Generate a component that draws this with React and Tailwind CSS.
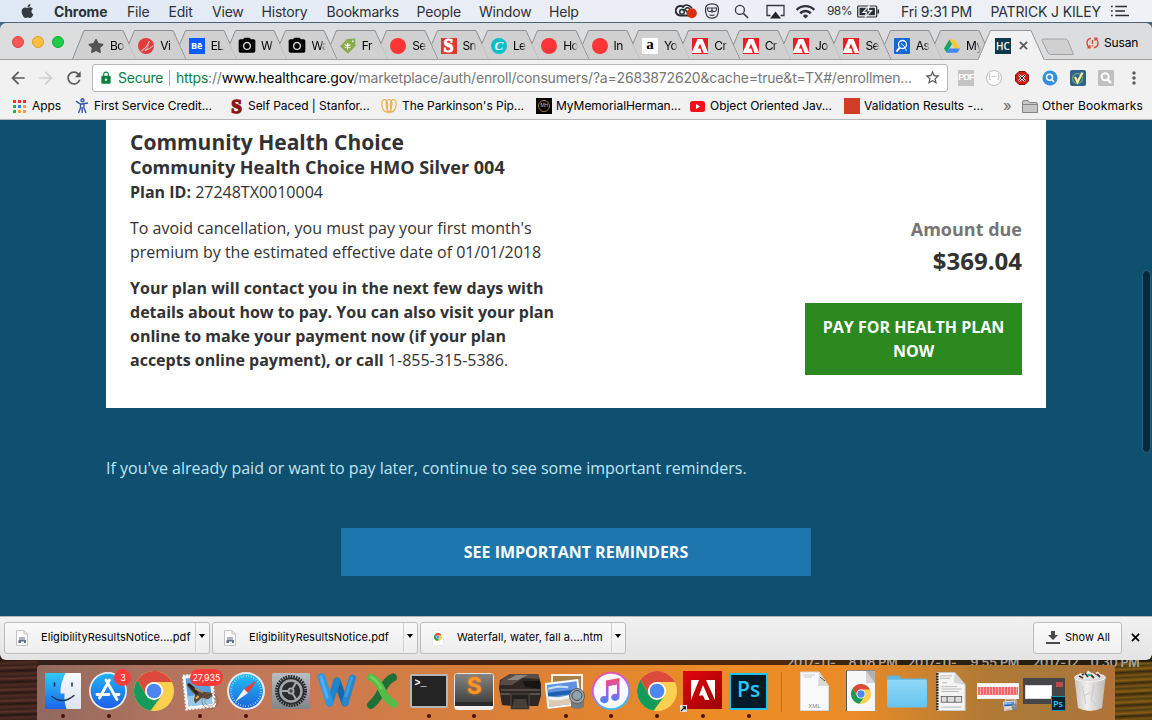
import React from "react";
import { FaApple, FaStar } from "react-icons/fa";
import { MdPhotoCamera, MdStarBorder, MdRefresh, MdArrowBack, MdArrowForward, MdLock, MdMoreVert, MdFileDownload, MdWifi } from "react-icons/md";

/* ---------- shared small drawings ---------- */

function ChromeLogo({ className }) {
  return (
    <svg viewBox="0 0 40 40" className={className}>
      <circle cx="20" cy="20" r="20" fill="#fcd04f" />
      <path d="M3.500 8.700 A20 20 0 0 0 16.500 39.700 L27.800 24.500 L20 29 L12.200 24.500 Z" fill="#129b5a" />
      <path d="M3.500 8.700 A20 20 0 0 1 37.400 10.300 L38 11 H20 Q13 11.500 11.300 17.500 L11.500 23 Z" fill="#dc4a3e" />
      <circle cx="20" cy="20" r="9" fill="#fff" />
      <circle cx="20" cy="20" r="7.300" fill="#4c86ee" />
    </svg>
  );
}

function Cross({ className }) {
  return (
    <svg viewBox="0 0 10 10" className={className} fill="none" stroke="currentColor" strokeWidth="1.900">
      <path d="M1 1 L9 9 M9 1 L1 9" />
    </svg>
  );
}

function AdobeMark({ className, bg }) {
  return (
    <svg viewBox="0 0 16 16" className={className}>
      <rect width="16" height="16" fill={bg} />
      <path d="M0 15 V14 L5.500 1 H10.500 L16 14.500 V15 H11.600 L8 5.600 L5.900 10.600 H8.300 L9.800 15 Z" fill="#fff" />
    </svg>
  );
}

const Star = () => <FaStar className="size-4 text-[#555]" />;
const RedDot = () => <span className="size-4 rounded-full bg-[#fc3636]" />;
const Camera = () => <MdPhotoCamera className="-m-0.5 size-5 shrink-0 text-black" />;
const Adobe = () => <AdobeMark className="size-4 shrink-0" bg="#ed1c24" />;
const Swirl = () => (
  <svg viewBox="0 0 16 16" className="size-4 shrink-0">
    <circle cx="8" cy="8" r="8" fill="#e03c3c" />
    <path d="M2.500 13.500 Q9 10 11.500 3 M7 12.500 Q12 11 15.500 7.500" stroke="#d3d3d4" strokeWidth="1" fill="none" />
    <path d="M3 14 Q9 11 11.500 4 Q11.500 9 8 12 Z" fill="#d3d3d4" fillOpacity="0.5" />
  </svg>
);
const Behance = () => (
  <span className="flex size-4 shrink-0 items-center justify-center bg-[#0a5cff] font-['Open_Sans',sans-serif] text-[9px] font-bold text-white">Bē</span>
);
const Tag = () => (
  <svg viewBox="0 0 16 16" className="size-4 shrink-0">
    <path d="M0 8.400 L7 1 L15.200 0.400 L15.500 8 L8 15.800 Z" fill="#88ab4f" />
    <path d="M7.600 5 V11.400 M4.800 6.600 L10.400 9.800 M10.400 6.600 L4.800 9.800" stroke="#fff" strokeWidth="1.200" />
    <circle cx="12.800" cy="3.200" r="1" fill="#dfe8cf" />
  </svg>
);
const SLogo = () => (
  <span className="flex size-4 shrink-0 items-center justify-center bg-[#dd3a33] font-['Liberation_Serif',serif] text-[18px] leading-none font-bold text-white [-webkit-text-stroke:1px_white]">S</span>
);
const CLogo = () => (
  <span className="flex size-4 shrink-0 items-center justify-center rounded-full bg-[#08bfcb] font-['Liberation_Serif',serif] text-[13px] leading-none font-bold text-white italic">C</span>
);
const ALogo = () => (
  <span className="flex size-4 shrink-0 items-center justify-center bg-white pb-[2px] font-['Liberation_Serif',serif] text-[15px] leading-none font-bold text-black">a</span>
);
const SearchTile = () => (
  <svg viewBox="0 0 16 16" className="size-4 shrink-0">
    <rect width="16" height="16" rx="1" fill="#1567d3" />
    <circle cx="8.500" cy="6.500" r="4" fill="none" stroke="#fff" strokeWidth="1.300" />
    <path d="M5.800 9.600 L2.500 13.500" stroke="#fff" strokeWidth="2" />
    <path d="M7 5.500 L10 8 L12.500 13" stroke="#fff" strokeWidth="0.900" fill="none" />
  </svg>
);
const Drive = () => (
  <svg viewBox="0 0 16 16" className="size-4 shrink-0">
    <path d="M5.400 1.500 H10.600 L16 10.500 H10.800 Z" fill="#fcc934" />
    <path d="M5.400 1.500 L8 6 L2.700 14.800 L0 10.500 Z" fill="#11a661" />
    <path d="M5.300 10.500 H16 L13.300 14.800 H2.700 Z" fill="#4285f4" />
  </svg>
);

/* ---------- menu bar ---------- */

const MENUS = [
  ["File", "w-[41.5px]"],
  ["Edit", "w-[43.5px]"],
  ["View", "w-[49.5px]"],
  ["History", "w-[65px]"],
  ["Bookmarks", "w-[90px]"],
  ["People", "w-[62.5px]"],
  ["Window", "w-[70px]"],
  ["Help", "w-[60px]"],
];

function MenuBar() {
  return (
    <div className="flex h-[23px] items-center border-b border-[#4a6178] bg-linear-to-r from-[#dfe9f5] via-[#ebeef5] to-[#eef2f6] text-[14px] tracking-[-0.2px] text-[#2b3138]">
      <FaApple className="ml-[20px] h-[16px] w-[15px] text-[#333a42]" />
      <span className="ml-[19px] w-[73px] font-bold tracking-[-0.1px]">Chrome</span>
      {MENUS.map(([m, w]) => (
        <span key={m} className={w}>{m}</span>
      ))}
      <svg viewBox="0 0 22 16" className="ml-[66px] h-[16px] w-[22px]">
        <path d="M13.500 12.500 H6 A4.800 4.800 0 1 1 9 4.500" fill="none" stroke="#26292d" strokeWidth="2" />
        <circle cx="7" cy="8.800" r="2.300" fill="none" stroke="#26292d" strokeWidth="1.400" />
        <path d="M7 4 Q12 -0.500 17 5 M7.500 6.500 Q12 7 12.500 10 M10 6 Q13 3.500 15 6" stroke="#26292d" strokeWidth="1.600" fill="none" />
        <circle cx="16.800" cy="10.300" r="5" fill="#d8300d" />
      </svg>
      <svg viewBox="0 0 16 16" className="ml-[7px] size-[16px]" fill="none" stroke="#34383d">
        <path d="M8 0.800 Q14.500 0.800 14.500 6.500 Q14.500 15.200 8 15.200 Q1.500 15.200 1.500 6.500 Q1.500 0.800 8 0.800 Z" strokeWidth="1.200" />
        <path d="M3.500 5 H12.500 V6.500 Q12 9 9.500 8.500 L8 7.500 L6.500 8.500 Q4 9 3.500 6.500 Z" strokeWidth="1.100" />
        <path d="M8 5 V10 M5.500 11.800 Q8 13 10.500 11.800" strokeWidth="1.100" />
      </svg>
      <svg viewBox="0 0 16 16" className="ml-[14px] size-[15px]" fill="none" stroke="#34383d">
        <circle cx="6.300" cy="6.300" r="4.800" strokeWidth="1.400" />
        <path d="M10 10 L15 15" strokeWidth="1.600" />
      </svg>
      <svg viewBox="0 0 19 15" className="ml-[17px] h-[15px] w-[19px]">
        <path d="M4.500 11.500 H1 V1.500 H18 V11.500 H14.500" fill="none" stroke="#34383d" strokeWidth="1.300" />
        <path d="M9.500 7.500 L15 14.500 H4 Z" fill="#22262b" />
      </svg>
      <MdWifi className="ml-[10px] size-[21px] text-[#2f343a]" />
      <span className="ml-[11px] w-[30px] text-[12px] tracking-[-0.6px]">98%</span>
      <svg viewBox="0 0 23 13" className="h-[13px] w-[23px]">
        <rect x="0.700" y="1" width="19" height="11" rx="1" fill="none" stroke="#2a2e33" strokeWidth="1.200" />
        <rect x="2.500" y="2.800" width="15.400" height="7.400" fill="#2a2e33" />
        <path d="M12.500 0.500 L6 7.300 H9.500 L8 12.500 L14.500 5.700 H11 Z" fill="#2a2e33" stroke="#e9eef5" strokeWidth="1.200" />
        <path d="M21.300 4.500 V8.500" stroke="#2a2e33" strokeWidth="1.600" />
      </svg>
      <span className="ml-[21px] w-[89.500px]">Fri 9:31 PM</span>
      <span className="w-[120.500px] tracking-[-0.150px]">PATRICK J KILEY</span>
      <svg viewBox="0 0 18 12" className="h-[12px] w-[18px]" stroke="#2a2e33" strokeWidth="1.500">
        <path d="M0 1.500 H1.700 M0 6 H1.700 M0 10.500 H1.700 M4.300 1.500 H16 M4.300 6 H14 M4.300 10.500 H18" />
      </svg>
    </div>
  );
}

/* ---------- tabs ---------- */

const TABS = [
  [Star, "Bo"], [Swirl, "Vi"], [Behance, "EL"], [Camera, "W"], [Camera, "Wa"], [Tag, "Fr"],
  [RedDot, "Se"], [SLogo, "Sn"], [CLogo, "Le"], [RedDot, "Ho"], [RedDot, "In"], [ALogo, "Yo"],
  [Adobe, "Cr"], [Adobe, "Cr"], [Adobe, "Jo"], [Adobe, "Se"], [SearchTile, "As"], [Drive, "My"],
];

function Tab({ Icon, title, first }) {
  return (
    <div className="relative -mr-[13.65px] flex h-[29px] w-[64px] shrink-0 items-center pt-[2px] pl-[16px]">
      <svg viewBox="0 0 64 29" className="absolute inset-0 h-[29px] w-[64px]">
        <path d={first ? "M0.500 29 L12 0.500 H51 L64 29 Z" : "M6.800 14 L12.500 0.500 H51 L64 29 H13.600 Z"} fill="#d0d0d1" />
        <path d={first ? "M0.500 29 L12 0.500 H51 L64 29" : "M6.800 14 L12.500 0.500 H51 L64 29"} fill="none" stroke="#8f8f90" />
      </svg>
      <span className="relative flex"><Icon /></span>
      <span className="relative ml-[6px] w-[14.500px] mask-r-from-60% mask-r-to-100% text-[12px] tracking-[-0.600px] whitespace-nowrap text-black">
        {title}
      </span>
    </div>
  );
}

function TabStrip() {
  return (
    <div className="flex h-[37px] items-end rounded-t-md border-b border-[#a1a1a2] bg-[#dcdddf]">
      <div className="mb-[11px] ml-3 flex w-[60px] shrink-0 gap-2">
        <span className="size-3 rounded-full border border-[#e0443e] bg-[#fc5753]" />
        <span className="size-3 rounded-full border border-[#dea123] bg-[#fdbc40]" />
        <span className="size-3 rounded-full border border-[#12ac28] bg-[#1ecb48]" />
      </div>
      {TABS.map(([Icon, title], i) => (
        <Tab key={i} Icon={Icon} title={title} first={i === 0} />
      ))}
      <div className="relative -mb-px flex h-[30px] w-[66px] shrink-0 items-center pt-px pl-[16.500px]">
        <svg viewBox="0 0 66 30" className="absolute inset-0 h-[30px] w-[66px]">
          <path d="M0 30 L12.500 0.500 H53 L66 30 Z" fill="#f1f1f2" />
          <path d="M0 29.500 L12.500 0.500 H53 L66 29.500" fill="none" stroke="#969697" />
        </svg>
        <span className="relative flex size-4 items-center justify-center bg-[#0b3a4a] font-['Open_Sans',sans-serif] text-[10px] leading-none font-semibold text-white">HC</span>
        <Cross className="relative ml-[8px] size-[9px] text-[#5a5a5a]" />
      </div>
      <svg viewBox="0 0 34 18" className="mb-[3px] -ml-[3px] h-[18px] w-[34px] shrink-0">
        <path d="M2 1 H24 Q26 1 27 3 L32.500 16.500 H9.500 Q8 16.500 7 14.500 L1 2.500 Q0.700 1 2 1 Z" fill="#d0d0d1" stroke="#a0a0a1" />
      </svg>
      <div className="mb-[7px] ml-[10.500px] flex items-center gap-[5px] text-[12px] tracking-[-0.150px] text-black">
        <svg viewBox="0 0 13 12" className="h-[12px] w-[13px]" fill="none" stroke="#d9463a" strokeWidth="1.400">
          <path d="M5 1.200 Q1 2 1 6 Q1 9 3.500 10.800 M1.500 10.800 H4 V8.300 M8 10.800 Q12 10 12 6 Q12 3 9.500 1.200 M11.500 1.200 H9 V3.700 M6.500 3 V7 M6.500 8.300 V9.600" />
        </svg>
        Susan
      </div>
    </div>
  );
}

/* ---------- toolbar ---------- */

function Toolbar() {
  return (
    <div className="flex h-[35px] items-center bg-[#f1f1f2]">
      <MdArrowBack className="ml-[8px] size-[20px] shrink-0 text-[#5a5a5a]" />
      <MdArrowForward className="ml-[8px] size-[20px] shrink-0 text-[#cfcfcf]" />
      <MdRefresh className="ml-[8px] size-[20px] shrink-0 text-[#5a5a5a]" />
      <div className="ml-[8px] flex h-[28px] w-[856px] shrink-0 items-center rounded-[3px] border border-[#b5b5b6] bg-white text-[14px] whitespace-nowrap">
        <MdLock className="ml-[6px] size-[14px] shrink-0 text-[#0b8043]" />
        <span className="ml-[5px] w-[51px] tracking-[-0.250px] text-[#0b8043]">Secure</span>
        <span className="mr-[6px] h-4 w-px bg-[#a8a8a8]" />
        <span className="w-[738px] tracking-[-0.190px] text-[#777]">
          <span className="text-[#0b8043]">https</span>://<span className="text-black">www.healthcare.gov</span>/marketplace/auth/enroll/consumers/?a=2683872620&amp;cache=true&amp;t=TX#/enrollmen...
        </span>
        <MdStarBorder className="ml-[10px] size-[17px] shrink-0 text-[#555]" />
      </div>
      <div className="ml-[10px] flex shrink-0 items-center gap-[12px]">
        <span className="flex h-4 w-4 items-center justify-center bg-[#c4c4c4] font-['Liberation_Sans',sans-serif] text-[9px] font-bold tracking-[-0.800px] text-white">PDF</span>
        <span className="flex size-4 items-center justify-center rounded-full border border-[#bbb] bg-white text-[7px] text-[#999]">{"{···}"}</span>
        <svg viewBox="0 0 16 16" className="size-4">
          <path d="M5 1.500 H11 L14.500 5 V11 L11 14.500 H5 L1.500 11 V5 Z" fill="#cf1c14" stroke="#7d1712" />
          <path d="M5 5 L11 11 M11 5 L5 11" stroke="#fff" strokeWidth="2.400" />
          <path d="M5 5 L11 11 M11 5 L5 11" stroke="#222" strokeWidth="1" />
        </svg>
        <svg viewBox="0 0 16 16" className="size-4">
          <circle cx="8" cy="8" r="7.500" fill="#348fdc" />
          <circle cx="7.500" cy="7.300" r="3" fill="none" stroke="#fff" strokeWidth="1.500" />
          <path d="M9.500 9.500 L12 12" stroke="#fff" strokeWidth="1.600" />
        </svg>
        <svg viewBox="0 0 16 16" className="size-4">
          <rect width="16" height="16" rx="2" fill="#2f628f" />
          <circle cx="7.500" cy="8.500" r="5" fill="none" stroke="#6fa36f" strokeWidth="1.300" />
          <path d="M5 7 L7.500 12 L12.500 2.500" fill="none" stroke="#f4ef9a" strokeWidth="2.200" />
        </svg>
        <svg viewBox="0 0 16 16" className="size-4">
          <rect width="16" height="16" rx="1" fill="#c0c0c0" />
          <circle cx="7.200" cy="6.800" r="3.500" fill="none" stroke="#fff" strokeWidth="2" />
          <path d="M9.800 9.600 L13 13" stroke="#fff" strokeWidth="2.400" />
        </svg>
      </div>
      <MdMoreVert className="ml-[10px] size-[20px] shrink-0 text-[#5a5a5a]" />
    </div>
  );
}

/* ---------- bookmarks bar ---------- */

const APP_DOTS = [
  "bg-[#ea3323]", "bg-[#ea3323]", "bg-[#ea3323]",
  "bg-[#2fa84f]", "bg-[#2d7ff0]", "bg-[#f0a32c]",
  "bg-[#2fa84f]", "bg-[#f0a32c]", "bg-[#f0a32c]",
];

function Bookmarks() {
  return (
    <div className="flex h-[25px] items-center border-b border-[#b6b6b7] bg-[#f1f1f2] pb-[2px] text-[12px] tracking-[-0.050px] whitespace-nowrap text-black">
      <div className="ml-[13px] grid w-[13px] grid-cols-3 gap-[2px]">
        {APP_DOTS.map((c, i) => <span key={i} className={`size-[3px] ${c}`} />)}
      </div>
      <span className="ml-[6px] w-[43px]">Apps</span>
      <svg viewBox="0 0 14 16" className="h-[16px] w-[14px] shrink-0" fill="none" stroke="#3457a5" strokeWidth="1.400">
        <circle cx="7.500" cy="2.200" r="1.500" />
        <path d="M1 3 Q5 6.500 7 6 T13 5 M5.500 6.500 V10 L3.500 15 M9 6.500 V10 L11 15 M7.200 9 V15" />
      </svg>
      <span className="ml-[5px] w-[136px]">First Service Credit...</span>
      <span className="flex w-[13px] justify-center font-['Liberation_Serif',serif] text-[19px] leading-none font-bold text-[#8c1515] [-webkit-text-stroke:1.500px_#8c1515]">S</span>
      <span className="ml-[5px] w-[133px]">Self Paced | Stanfor...</span>
      <svg viewBox="0 0 16 16" className="size-4 shrink-0" fill="none" stroke="#efad4b" strokeWidth="1.200">
        <path d="M6 14.500 Q0 12 1 4 Q1.500 1.500 4 1.500 Q7 2 6.500 9 Z M10 14.500 Q16 12 15 4 Q14.500 1.500 12 1.500 Q9 2 9.500 9 Z M5.500 3 Q8 0 10.500 3 Q12 9 8 15 Q4 9 5.500 3" />
      </svg>
      <span className="ml-[5px] w-[134px]">The Parkinson's Pip...</span>
      <span className="flex size-4 items-center justify-center bg-black">
        <span className="flex size-[12px] items-center justify-center rounded-full border border-[#a67c25] text-[5px] tracking-[-0.300px] text-[#bbb]">MH</span>
      </span>
      <span className="ml-[4px] w-[134px]">MyMemorialHerman...</span>
      <svg viewBox="0 0 15 11" className="h-[11px] w-[15px] shrink-0">
        <rect width="15" height="11" rx="2.500" fill="#fc0d1b" />
        <path d="M6 3 L10 5.500 L6 8 Z" fill="#fff" />
      </svg>
      <span className="ml-[5px] w-[134px]">Object Oriented Jav...</span>
      <span className="size-4 bg-[#d23c25]" />
      <span className="ml-[4px] w-[139px] tracking-[0.010px]">Validation Results -...</span>
      <span className="w-[19px] pb-px text-[15px] leading-none text-[#666]">»</span>
      <svg viewBox="0 0 16 13" className="h-[13px] w-[16px] shrink-0">
        <path d="M0.500 12.500 V2 Q0.500 0.500 2 0.500 H6 L7.500 2.500 H14 Q15.500 2.500 15.500 4 V12.500 Z" fill="#c6c6c6" stroke="#858585" />
        <path d="M1 4.500 H15" stroke="#858585" />
      </svg>
      <span className="ml-[4px] tracking-[0.150px]">Other Bookmarks</span>
    </div>
  );
}

/* ---------- page ---------- */

function Page() {
  return (
    <main className="relative h-[496px] overflow-hidden bg-[#0f4f6f] font-['Open_Sans',sans-serif] text-[16px] leading-6 text-[#323232]">
      <section className="ml-[106px] flex h-[288px] w-[940px] justify-between bg-white px-6 pt-[10px]">
        <div className="w-[432px]">
          <h1 className="text-[21px] leading-[25px] font-bold">Community Health Choice</h1>
          <h2 className="text-[18px] leading-[25px] font-bold">Community Health Choice HMO Silver 004</h2>
          <p><b className="font-bold">Plan ID:</b> 27248TX0010004</p>
          <p className="mt-3">To avoid cancellation, you must pay your first month's<br />premium by the estimated effective date of 01/01/2018</p>
          <p className="mt-3">
            <b className="font-bold">Your plan will contact you in the next few days with<br />details about how to pay. You can also visit your plan<br />online to make your payment now (if your plan<br />accepts online payment), or call</b> 1-855-315-5386.
          </p>
        </div>
        <div className="w-[217px] pt-[87px] text-right">
          <div className="text-[18px] font-bold text-[#757575]">Amount due</div>
          <div className="mt-[2px] text-[24px] leading-9 font-bold">$369.04</div>
          <button className="mt-[24px] block h-[72px] w-full bg-[#2b8920] px-4 text-center font-bold text-white">PAY FOR HEALTH PLAN<br />NOW</button>
        </div>
      </section>
      <p className="mt-12 ml-[106px] text-[#bfe6f6]">If you've already paid or want to pay later, continue to see some important reminders.</p>
      <button className="mx-auto mt-12 block h-12 w-[470px] bg-[#1d76ae] font-bold text-white">SEE IMPORTANT REMINDERS</button>
      <div className="absolute top-[150px] left-[1142px] h-[183px] w-[9px] rounded-full border border-[#2d6581] bg-[#052a3d]" />
    </main>
  );
}

/* ---------- download shelf ---------- */

function FileIcon({ chrome }) {
  return (
    <span className="relative flex h-4 w-3 items-end justify-center">
      <svg viewBox="0 0 12 16" className="absolute inset-0 h-4 w-3">
        <path d="M0.500 0.500 H8 L11.500 4 V15.500 H0.500 Z" fill="#fff" stroke={chrome ? "#ececec" : "#c3c3c3"} />
        {!chrome && <path d="M8 0.500 V4 H11.500" fill="none" stroke="#bbb" />}
        {!chrome && <path d="M3 7 H9 V10 H3 Z" fill="#aab4c6" />}
        {!chrome && <path d="M2.500 10 H10 V13 H8 V11.500 H5 V13 H2.500 Z" fill="#5f6f8e" />}
      </svg>
      {chrome && <ChromeLogo className="relative mb-[5px] size-2" />}
    </span>
  );
}

function Download({ name, chrome }) {
  return (
    <div className="flex h-8 w-[206px] items-center rounded-[3px] border border-[#bcbcbc] bg-linear-to-b from-[#f9f9f9] to-[#eeeeee]">
      <span className="ml-[11px] flex"><FileIcon chrome={chrome} /></span>
      <span className="ml-[13px] text-[11px] tracking-[0.050px] whitespace-nowrap text-black">{name}</span>
      <span className="ml-auto flex h-[29px] w-[14px] items-center justify-center border-l border-[#cfcfcf] pr-px">
        <span className="mb-[4px] border-x-[3px] border-t-[4px] border-x-transparent border-t-black" />
      </span>
    </div>
  );
}

function Shelf() {
  return (
    <div className="relative z-10 flex h-[44px] items-center gap-[2px] rounded-b-md border-t border-[#b5b5b5] bg-linear-to-b from-[#f1f1f1] to-[#e4e4e4] pb-[2px] pl-1">
      <Download name="EligibilityResultsNotice....pdf" />
      <Download name="EligibilityResultsNotice.pdf" />
      <Download name="Waterfall, water, fall a....htm" chrome />
      <div className="ml-auto flex h-8 w-[89px] items-center rounded-[3px] border border-[#bcbcbc] bg-linear-to-b from-[#fafafa] to-[#f0f0f0] text-[11px] text-black">
        <svg viewBox="0 0 14 14" className="ml-[12px] h-[14px] w-[14px]" fill="#4a4a4a">
          <path d="M5 0 H9 V4 H12 L7 9 L2 4 H5 Z M0 11 H14 V13 H0 Z" />
        </svg>
        <span className="ml-[5px]">Show All</span>
      </div>
      <Cross className="mr-[12px] ml-[7px] size-[9px] text-black" />
    </div>
  );
}

/* ---------- dock ---------- */

const Finder = () => (
  <svg viewBox="0 0 36 36" className="size-9">
    <defs>
      <linearGradient id="fl" x2="0" y2="1"><stop stopColor="#2fc9fb" /><stop offset="1" stopColor="#1b66e8" /></linearGradient>
      <linearGradient id="fr" x2="0" y2="1"><stop stopColor="#f8fafc" /><stop offset="1" stopColor="#dbe3ee" /></linearGradient>
    </defs>
    <rect width="36" height="36" rx="1" fill="url(#fr)" />
    <path d="M0 0 H20.500 Q15 11 15.500 20.500 H19.500 Q19 29 21.500 36 H0 Z" fill="url(#fl)" />
    <path d="M9.500 10 V13 M27 10 V13" stroke="#173250" strokeWidth="1.600" strokeLinecap="round" />
    <path d="M7 23.500 Q18 32 29 22.500" fill="none" stroke="#173250" strokeWidth="1.400" strokeLinecap="round" />
  </svg>
);
const AppStore = () => (
  <svg viewBox="0 0 38 38" className="mr-px size-[38px]">
    <defs><linearGradient id="as" x2="0" y2="1"><stop stopColor="#22b2f8" /><stop offset="1" stopColor="#1c5fe8" /></linearGradient></defs>
    <circle cx="19" cy="19" r="19" fill="#e9ecf0" />
    <circle cx="19" cy="19" r="17.300" fill="url(#as)" />
    <path d="M17 8 L28 27.500 M20.500 8 L10.500 26 M8 22.500 H20 M25 22.500 H30" stroke="#fff" strokeWidth="2.800" strokeLinecap="round" />
  </svg>
);
const Mail = () => (
  <svg viewBox="0 0 38 40" className="h-10 w-[38px]">
    <g transform="rotate(-6 19 20)">
      <rect x="3.500" y="3" width="29" height="34" fill="#f5f8fb" stroke="#f5f8fb" strokeWidth="2" strokeDasharray="2 1.500" />
      <rect x="6" y="6" width="24" height="28" fill="#5c9fd8" />
      <rect x="6" y="24" width="24" height="10" fill="#9cc8ea" />
      <path d="M6.500 12 Q8 9.500 11 13 Q16 18 19 20.500 L30 23 L31 26 L26 29 L20 27 L13 32 L12 28 L14 23 Q9 19 6.500 12 Z" fill="#5e4636" />
      <path d="M8 12 Q13 16 16 23" stroke="#2b221d" strokeWidth="3" fill="none" />
      <path d="M14 17 L22 22" stroke="#a98a5c" strokeWidth="1.500" />
      <path d="M14 27 L17 25" stroke="#e6b93a" strokeWidth="2" />
    </g>
    <circle cx="29" cy="30" r="8" fill="none" stroke="#74635e" strokeOpacity="0.600" />
    <circle cx="29" cy="30" r="5" fill="none" stroke="#74635e" strokeOpacity="0.500" />
  </svg>
);
const Safari = () => (
  <svg viewBox="0 0 38 38" className="size-[38px]">
    <defs><linearGradient id="sf" x2="0" y2="1"><stop stopColor="#23c0f2" /><stop offset="1" stopColor="#1b63dc" /></linearGradient></defs>
    <circle cx="19" cy="19" r="19" fill="#e6e9ed" />
    <circle cx="19" cy="19" r="17" fill="url(#sf)" />
    <circle cx="19" cy="19" r="15" fill="none" stroke="#c7ebfb" strokeWidth="2" strokeDasharray="0.600 2" />
    <path d="M30 8 L21 21 L17 17 Z" fill="#f03b3a" />
    <path d="M8 30 L21 21 L17 17 Z" fill="#f3f3f3" />
  </svg>
);
const Prefs = () => (
  <svg viewBox="0 0 38 36" className="h-9 w-[38px]">
    <defs><linearGradient id="pf" x2="0" y2="1"><stop stopColor="#b9bec1" /><stop offset="1" stopColor="#808689" /></linearGradient></defs>
    <rect width="38" height="36" rx="2" fill="url(#pf)" />
    <circle cx="19" cy="18" r="14.500" fill="none" stroke="#24272a" strokeWidth="3" strokeDasharray="1.600 1" />
    <circle cx="19" cy="18" r="13.500" fill="#2b2e31" />
    <circle cx="19" cy="18" r="10.500" fill="none" stroke="#a2a6a9" strokeWidth="2.500" />
    <path d="M19 18 L9 18 M19 18 L24.500 9 M19 18 L24.500 27" stroke="#a4a8ab" strokeWidth="2" />
    <circle cx="19" cy="18" r="3.500" fill="#a4a8ab" />
    <circle cx="19" cy="18" r="1.800" fill="#4a4d50" />
  </svg>
);
const Word = () => (
  <svg viewBox="0 0 40 38" className="h-[38px] w-10" fill="none" strokeLinecap="round">
    <path d="M20 9 L28 31" stroke="#1668aa" strokeWidth="7" />
    <path d="M12.500 31 L20 9" stroke="#2283c9" strokeWidth="7" />
    <path d="M28 31 L35.500 6" stroke="#2487ce" strokeWidth="7" />
    <path d="M4.500 5 L12.500 31" stroke="#2f95dc" strokeWidth="7.500" />
    <path d="M4 5 L10 25" stroke="#4cb0f0" strokeWidth="3.500" />
    <path d="M34.500 6 L29 24" stroke="#3a9de2" strokeWidth="3" />
  </svg>
);
const Excel = () => (
  <svg viewBox="0 0 38 38" className="size-[38px]" fill="none" strokeLinecap="round">
    <path d="M29 5.500 Q23 8 18 18 T7 33" stroke="#1f6f37" strokeWidth="8" />
    <path d="M7 5.500 Q14 9 18 18 T30 32" stroke="#55bb47" strokeWidth="7.500" />
    <path d="M7 5 Q13 8 17 16" stroke="#6fd05c" strokeWidth="3" />
  </svg>
);
const Terminal = () => (
  <span className="flex h-[34px] w-[38px] rounded-[2px] border-2 border-[#b5b5b5] bg-[#242424] pt-[2px] pl-[3px] font-['Liberation_Mono',monospace] text-[10px] leading-3 font-bold text-white">&gt;_</span>
);
const Sublime = () => (
  <span className="flex h-[37px] w-10 flex-col rounded-[4px] border border-[#e6e6e6] border-b-[4px] border-b-[#efefef] bg-[#2b2b2b]">
    <span className="flex h-[28px] items-center justify-center rounded-[2px] bg-linear-to-b from-[#858585] to-[#444] pb-[2px] font-['Inter',sans-serif] text-[23px] leading-none font-bold text-[#f99626] [text-shadow:0_0_3px_#f0801c]">S</span>
  </span>
);
const Printer = () => (
  <svg viewBox="0 0 44 38" className="h-[38px] w-11">
    <path d="M2 8 L12 2 H40 L43 12 L43 24 L40 34 L30 34 V24 H14 V34 L4 33 L1 16 Z" fill="#2d2826" />
    <path d="M3 8 L12 2 H40 L42 7 L25 6 L14 13 H2 Z" fill="#574c46" />
    <path d="M9 8 L18 3 H30 L20 8 Z" fill="#8d857e" />
    <path d="M25 9 H42 V17 L27 15 Z" fill="#171412" />
    <path d="M3 18 H42" stroke="#7d6c60" />
    <rect x="13" y="22" width="18" height="15" fill="#24201e" stroke="#5e534c" strokeWidth="0.800" />
    <path d="M16 27 H28 L30 36 H14 Z" fill="#474039" />
    <path d="M2 22 H12 M32 22 H42" stroke="#5e5149" strokeWidth="2" />
  </svg>
);
const Preview = ({ className = "h-[38px] w-[42px]" }) => (
  <svg viewBox="0 0 42 38" className={className}>
    <rect x="6" y="2" width="32" height="29" fill="#f3efe4" />
    <rect x="8" y="4" width="28" height="25" fill="#a88049" />
    <g transform="rotate(-7 18 22)">
      <rect x="1" y="9" width="34" height="26" fill="#fafafa" />
      <rect x="3" y="11" width="30" height="22" fill="#5f93e2" />
      <rect x="3" y="19" width="30" height="4" fill="#1e5faf" />
      <path d="M3 23 Q14 26 33 25 V33 H3 Z" fill="#dccbb0" />
      <path d="M3 24 Q14 28 28 24" stroke="#eef3f8" strokeWidth="3" fill="none" />
      <path d="M4 15 L14 14 L24 16" stroke="#cfdff5" strokeWidth="2" fill="none" />
    </g>
    <path d="M26 28 Q32 34 39 27 V35 Q32 39 26 35 Z" fill="#777a7d" />
    <circle cx="32" cy="24" r="7.500" fill="#a3a8ab" stroke="#5a5e61" />
    <circle cx="32" cy="23.500" r="5" fill="#8fa2b2" stroke="#3e4245" />
  </svg>
);
const ITunes = () => (
  <svg viewBox="0 0 40 40" className="size-10">
    <defs>
      <linearGradient id="it" x2="0.400" y2="1"><stop stopColor="#f7507a" /><stop offset="0.500" stopColor="#c95cf0" /><stop offset="1" stopColor="#3cb8fb" /></linearGradient>
      <linearGradient id="nt" x2="0" y2="1"><stop stopColor="#fb4b6e" /><stop offset="0.500" stopColor="#b455e8" /><stop offset="1" stopColor="#3d8bf5" /></linearGradient>
    </defs>
    <circle cx="20" cy="20" r="19.300" fill="url(#it)" />
    <circle cx="20" cy="20" r="17.300" fill="#fafafd" />
    <path d="M15 9.500 L28.500 7 V26.500 A4.200 3.600 0 1 1 26 23 V13.500 L17.500 15.200 V28.800 A4.200 3.600 0 1 1 15 25.300 Z" fill="url(#nt)" />
  </svg>
);
const ChromeDock = () => <ChromeLogo className="size-10" />;
const AdobeDock = () => (
  <span className="relative -mt-[2px] flex h-[38px] w-[39px] items-center justify-center bg-linear-to-br from-[#e3060c] to-[#9c0206]">
    <svg viewBox="0 0 24 20" className="h-5 w-6"><path d="M0 20 V0 H8 Z M24 20 V0 H15 Z M12 5 L18.500 20 H14 L12 15.500 H8 Z" fill="#fff" /></svg>
    <svg viewBox="0 0 8 8" className="absolute bottom-[-3px] left-[-3px] size-[7px]"><rect width="8" height="8" fill="#ddd" /><path d="M1 7 L6 2 M3 2 H6 V5" stroke="#111" strokeWidth="1.400" fill="none" /></svg>
  </span>
);
const Photoshop = () => (
  <span className="flex h-[37px] w-[39px] items-center justify-center border-2 border-[#22c3f0] bg-[#031b28] pb-[3px] font-['Open_Sans',sans-serif] text-[21px] leading-none font-semibold text-[#2bc7f4]">Ps</span>
);
const XmlFile = () => (
  <svg viewBox="0 0 29 40" className="h-10 w-[29px]">
    <path d="M0.500 1 H19 L28.500 15 V39.500 H0.500 Z" fill="#f9f9f9" stroke="#d8d8d8" />
    <path d="M19 1 L18 15 H28.500 Z" fill="#d9d9d9" />
    <path d="M3 4 H15 M4 6 H12" stroke="#ccc" />
    <path d="M20 6 L25 10" stroke="#555" />
    <text x="14.500" y="37" textAnchor="middle" fontFamily="Liberation Sans" fontSize="6" fill="#8a8a8a">XML</text>
  </svg>
);
const ChromeFile = () => (
  <span className="relative flex h-10 w-[28px] items-center justify-center bg-[#f7f7f7] shadow-[-1px_0_0_#555,0_-1px_0_#888]">
    <span className="absolute top-0 right-0 border-t-[12px] border-l-[9px] border-t-[#b5b2ae] border-l-[#d5d5d5]" />
    <ChromeLogo className="mt-[5px] size-5" />
  </span>
);
const Folder = () => (
  <svg viewBox="0 0 42 34" className="h-[33px] w-[42px]">
    <defs><linearGradient id="fo" x2="0" y2="1"><stop stopColor="#8fd8f8" /><stop offset="1" stopColor="#66c3ef" /></linearGradient></defs>
    <path d="M0.500 33 V2.500 Q0.500 0.500 2.500 0.500 H12 Q14 0.500 15 3.500 H39.500 Q41.500 3.500 41.500 5.500 V33 Z" fill="#5fb8e4" />
    <rect x="0.500" y="5" width="41" height="28.500" rx="1.500" fill="url(#fo)" />
  </svg>
);
const Notes = () => (
  <svg viewBox="0 0 31 40" className="mr-[4px] h-[39px] w-[31px]">
    <path d="M2 0.500 H20 L30.500 13 V39.500 H2 Z" fill="#f4f4f4" stroke="#c9c9c9" />
    <path d="M2 1 V39" stroke="#222" strokeWidth="2.500" strokeDasharray="1.800 1" />
    <path d="M20 0.500 L19 11 L30.500 13 Z" fill="#d5d5d5" />
    <path d="M5 4 H17 M5 6.500 H15 M7 11 H12 M6 15 H22 M6 17.500 H27 M6 20 H24 M6 36 H27" stroke="#b9b9b9" />
    <rect x="6" y="25" width="21" height="6" fill="#ddd" stroke="#555" strokeWidth="0.800" />
    <path d="M12 25 V31 M20 25 V31" stroke="#555" />
  </svg>
);
const PinkShot = () => (
  <span className="relative mr-[2px] flex h-4 w-[42px] items-center border border-[#eee] bg-[#f8f8f8]">
    <span className="h-[8px] w-full bg-[repeating-linear-gradient(90deg,#f5666c_0px,#f5666c_2px,#f9a6a8_2px,#f9a6a8_3px)]" />
    <span className="absolute top-[14px] right-0"><Preview className="h-[13px] w-[15px]" /></span>
  </span>
);
const PsShot = () => (
  <span className="relative mr-[2px] flex h-[26px] w-[42px] items-start bg-[#464648] p-[2px] pt-[7px]">
    <span className="h-[14px] w-[27px] border border-[#ddd] bg-white" />
    <span className="absolute top-[4px] right-[2px] h-[5px] w-[7px] bg-[#bb4a4f]" />
    <span className="absolute -right-px -bottom-[7px] flex size-[15px] items-center justify-center border border-[#1595bd] bg-[#06202e] font-['Open_Sans',sans-serif] text-[9px] leading-none font-semibold text-[#2bc7f4]">Ps</span>
  </span>
);
const Trash = () => (
  <svg viewBox="0 0 32 42" className="mr-[2px] h-[42px] w-8">
    <defs><linearGradient id="tr"><stop stopColor="#c9c7c5" /><stop offset="0.400" stopColor="#f0efee" /><stop offset="1" stopColor="#bcb9b6" /></linearGradient></defs>
    <path d="M0.500 8 L4 38 Q16 44 28 38 L31.500 8 Z" fill="url(#tr)" />
    <ellipse cx="16" cy="7.500" rx="15.500" ry="4" fill="#d9d7d5" stroke="#f4f4f4" />
    <path d="M3 8 L6 3 L11 5 L14 0.500 L19 4 L24 1.500 L28 7 L22 9 L12 9.500 Z" fill="#e9e7e5" />
    <path d="M5 6 L9 8 M11 3 L14 7 M17 5 L20 8 M23 4 L26 7 M8 5 L10 4" stroke="#3d3835" strokeWidth="1.800" />
    <path d="M14 5 H17" stroke="#29b58a" strokeWidth="2" />
    <path d="M20 3 L23 5" stroke="#b84545" strokeWidth="1.500" />
    <path d="M8 16 L12 34 M20 14 L17 30 L24 36 M10 26 L20 20" stroke="#cfcdcb" fill="none" />
  </svg>
);

const APPS = [
  { I: Finder, dot: true }, { I: AppStore, dot: true, badge: "3" }, { I: ChromeDock },
  { I: Mail, dot: true, badge: "27,935" }, { I: Safari, dot: true }, { I: Prefs }, { I: Word }, { I: Excel },
  { I: Terminal, dot: true }, { I: Sublime, dot: true }, { I: Printer }, { I: Preview, dot: true },
  { I: ITunes, dot: true }, { I: ChromeDock, dot: true }, { I: AdobeDock, dot: true }, { I: Photoshop, dot: true },
];
const FILES = [XmlFile, ChromeFile, Folder, Notes, PinkShot, PsShot, Trash];

const LABELS = [
  ["2017-11-", "w-[62px]"], ["8.08 PM", "w-[59px]"], ["2017-11-", "w-[63px]"],
  ["9.55 PM", "w-[62px]"], ["2017-12", "w-[58px]"], ["0.30 PM", "w-[60px]"],
];

function Desktop() {
  return (
    <div className="relative -mt-[6px] h-[66px] bg-[linear-gradient(90deg,#33201c_0%,#3d2015_20%,#4a230e_45%,#4f2a0c_68%,#2c2011_78%,#241d10_100%)] pt-[11px]">
      <div className="absolute top-[6px] left-0 h-[60px] w-[37px] bg-[repeating-linear-gradient(178deg,#24140f_0px,#4d2c22_3px,#38201b_6px,#5a3328_8px,#2c1915_11px)]" />
      <div className="absolute top-[8px] left-[1115px] h-[58px] w-[37px] bg-[repeating-linear-gradient(177deg,#3d2c10_0px,#7b5413_3px,#4b3d14_5px,#8d5c12_8px,#2f2912_11px)]" />
      <div className="absolute top-[1px] left-[786.500px] flex text-[12.500px] leading-4 font-semibold tracking-[-0.200px] whitespace-nowrap text-[#a9a39b]">
        {LABELS.map(([t, w], i) => <span key={i} className={w}>{t}</span>)}
      </div>
      <div className="relative ml-[37px] flex h-[55px] w-[1078px] rounded-t-[4px] bg-[linear-gradient(90deg,#91695f_0%,#b1745f_12%,#c97a55_25%,#d67e3e_38%,#e08331_50%,#ec8c26_63%,#e98b28_76%,#b07a35_88%,#a9793a_94%,#b1723a_100%)] pl-[3px]">
        {APPS.map(({ I, dot, badge }, i) => (
          <div key={i} className="relative flex w-[45.730px] shrink-0 flex-col items-center">
            <span className="flex h-[45px] items-center pt-[7px]"><I /></span>
            {dot && <span className="mt-[4px] size-1 rounded-full bg-[#4a1208]" />}
            {badge && (
              <span className="absolute top-[4px] right-0 flex h-[17px] min-w-[17px] items-center justify-center rounded-full bg-[#fc3c3a] px-[2.500px] text-[9px] leading-none tracking-[-0.100px] text-white">{badge}</span>
            )}
          </div>
        ))}
        <div className="mt-[7px] flex h-10 w-[20px] shrink-0 justify-center"><span className="h-full w-px bg-[#c06a12]" /></div>
        {FILES.map((I, i) => (
          <div key={i} className="flex w-[46px] shrink-0 flex-col items-center">
            <span className="flex h-[45px] items-center pt-[7px]"><I /></span>
          </div>
        ))}
      </div>
    </div>
  );
}

export default function App() {
  return (
    <div className="h-[720px] w-[1152px] overflow-hidden bg-[#4a6178] font-['Inter','Liberation_Sans',sans-serif]">
      <MenuBar />
      <TabStrip />
      <Toolbar />
      <Bookmarks />
      <Page />
      <Shelf />
      <Desktop />
    </div>
  );
}
